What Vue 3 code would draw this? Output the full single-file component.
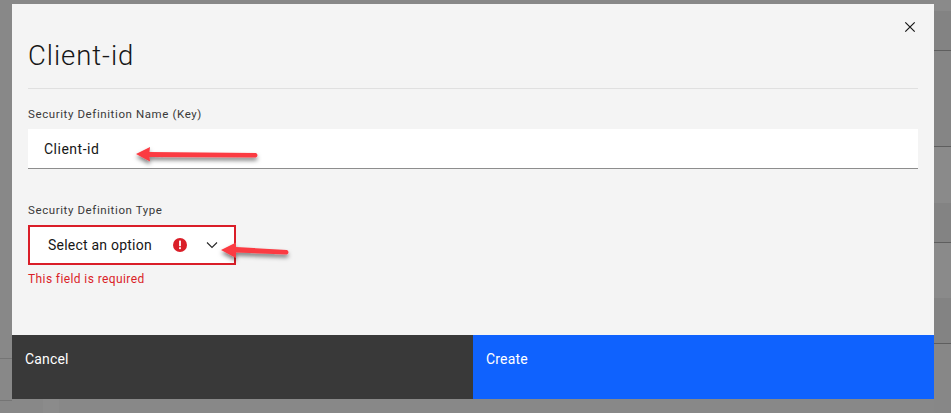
<script setup>
const stripes = [
  { h: 11, c: '#8a8a8a' }, { h: 40, c: '#838383', line: true },
  { h: 96, c: '#858585', line: true }, { h: 56, c: '#8a8a8a' },
  { h: 40, c: '#838383', line: true }, { h: 55, c: '#8a8a8a' },
  { h: 46, c: '#838383', line: true }, { h: 69, c: '#878787' }
]
</script>

<template>
  <div class="page">
    <div class="backdrop-right">
      <div
        v-for="(s, i) in stripes"
        :key="i"
        class="stripe"
        :class="{ lined: s.line }"
        :style="{ height: s.h + 'px', background: s.c }"
      ></div>
    </div>
    <div class="backdrop-left">
      <div class="cell tall"></div>
      <div class="cell"></div>
    </div>
    <div class="backdrop-bottom"></div>
    <section class="modal">
      <div class="body">
        <header class="head">
          <h1 class="title">Client-id</h1>
          <button class="close" aria-label="Close">
            <svg width="16" height="16" viewBox="0 0 16 16"><path d="M3.3 3.3l9.4 9.4M12.7 3.3l-9.4 9.4" stroke="#161616" stroke-width="1.2" fill="none"/></svg>
          </button>
        </header>
        <div class="field first">
          <label class="label">Security Definition Name (Key)</label>
          <div class="input">Client-id</div>
        </div>
        <div class="field second">
          <label class="label">Security Definition Type</label>
          <div class="select">
            <span class="select-text">Select an option</span>
            <svg class="err" width="16" height="16" viewBox="0 0 16 16"><circle cx="8" cy="8" r="7" fill="#da1e28"/><rect x="7.1" y="3.6" width="1.8" height="5.6" fill="#fff"/><rect x="7.1" y="10.2" width="1.8" height="1.9" fill="#fff"/></svg>
            <svg class="chev" width="16" height="16" viewBox="0 0 16 16"><path d="M3 5.500l5 5 5-5" stroke="#262626" stroke-width="1.1" fill="none"/></svg>
          </div>
          <div class="error">This field is required</div>
        </div>
      </div>
      <footer class="foot">
        <button class="btn cancel">Cancel</button>
        <button class="btn create">Create</button>
      </footer>
    </section>
    <svg class="arrows" width="951" height="413" viewBox="0 0 951 413">
      <defs>
        <filter id="sh" x="-20%" y="-100%" width="140%" height="350%">
          <feDropShadow dx="0" dy="3" stdDeviation="2" flood-color="#000" flood-opacity="0.5"/>
        </filter>
      </defs>
      <g filter="url(#sh)" fill="#fb3b42" stroke="none">
        <path d="M136 154L150 147L149.500 152L256 153Q259 155 256 157.500L149.500 157L150 161.500Z"/>
        <path d="M221 250L236 242.500L236 247L287 250Q290 252 287 254.500L236 252.500L236 258Z"/>
      </g>
    </svg>
  </div>
</template>

<style scoped>
.page {
  position: relative;
  width: 951px;
  height: 413px;
  overflow: hidden;
  background: #888888;
  padding: 4px 17px 14px 12px;
  box-sizing: border-box;
  font-family: "Roboto", "Liberation Sans", sans-serif;
  color: #161616;
}
.backdrop-right {
  position: absolute;
  top: 0;
  right: 0;
  width: 17px;
}
.backdrop-left {
  position: absolute;
  top: 0;
  left: 0;
  width: 12px;
}
.cell {
  height: 42px;
  border-bottom: 1px solid #757575;
  box-sizing: border-box;
}
.cell.tall { height: 359px; }
.backdrop-bottom {
  position: absolute;
  left: 43px;
  bottom: 0;
  width: 16px;
  height: 14px;
  background: #8b8b8b;
}
.stripe { box-sizing: border-box; }
.stripe.lined { border-bottom: 1px solid #5e5e5e; }
.modal {
  position: relative;
  height: 395px;
  display: flex;
  flex-direction: column;
  background: #f4f4f4;
}
.body {
  flex: 1;
  padding: 0 16px;
}
.head {
  height: 85px;
  border-bottom: 1px solid #e0e0e0;
  box-sizing: border-box;
  position: relative;
  padding-top: 34px;
}
.title {
  margin: 0;
  font-size: 27.500px;
  line-height: 36px;
  font-weight: 300;
  letter-spacing: 0.95px;
}
.close {
  position: absolute;
  top: 15px;
  right: 0;
  width: 16px;
  height: 16px;
  padding: 0;
  border: 0;
  background: none;
  display: flex;
}
.label {
  display: block;
  font-size: 11.500px;
  line-height: 16px;
  letter-spacing: 0.6px;
  color: #393939;
}
.first { padding-top: 17px; }
.first .label { margin-bottom: 7px; }
.input {
  height: 40px;
  box-sizing: border-box;
  background: #fff;
  border-bottom: 1px solid #8d8d8d;
  padding: 0 16px;
  font-size: 14px;
  line-height: 40px;
  letter-spacing: 0.5px;
}
.second { padding-top: 33px; }
.second .label { margin-bottom: 7px; }
.select {
  width: 208px;
  height: 40px;
  box-sizing: border-box;
  border: 2px solid #da1e28;
  background: #fff;
  display: flex;
  align-items: center;
  padding-left: 18px;
}
.select-text {
  font-size: 14px;
  letter-spacing: 0.22px;
  width: 124px;
}
.err { flex: none; }
.chev { flex: none; margin-left: 16px; }
.error {
  margin-top: 6px;
  font-size: 12px;
  line-height: 16px;
  letter-spacing: 0.4px;
  color: #da1e28;
}
.foot {
  height: 64px;
  display: flex;
}
.btn {
  flex: 1;
  border: 0;
  margin: 0;
  padding: 0 13px 16px;
  text-align: left;
  color: #fff;
  font-family: inherit;
  font-size: 14px;
  letter-spacing: 0.16px;
  height: 64px;
}
.cancel { background: #393939; }
.create { background: #0f62fe; }
.arrows {
  position: absolute;
  top: 0;
  left: 0;
}
</style>
